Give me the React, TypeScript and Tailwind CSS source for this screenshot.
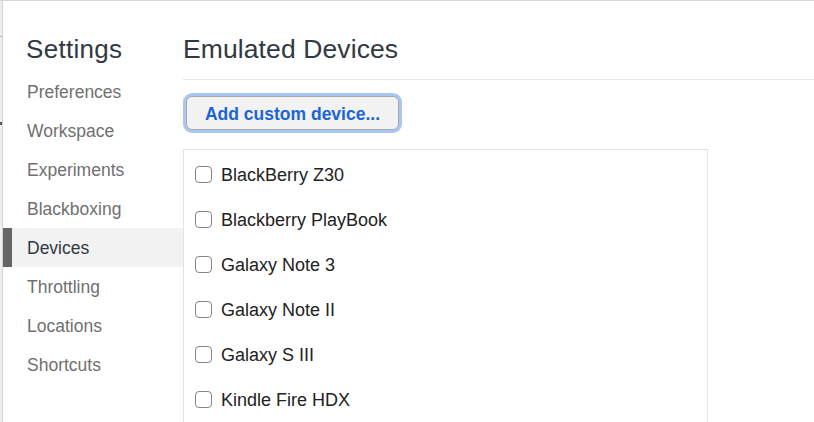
import React, { useState } from "react";

const navItems = [
  "Preferences",
  "Workspace",
  "Experiments",
  "Blackboxing",
  "Devices",
  "Throttling",
  "Locations",
  "Shortcuts",
];

const devices = [
  "BlackBerry Z30",
  "Blackberry PlayBook",
  "Galaxy Note 3",
  "Galaxy Note II",
  "Galaxy S III",
  "Kindle Fire HDX",
];

const App: React.FC = () => {
  const [selected, setSelected] = useState<string>("Devices");
  const [checked, setChecked] = useState<Record<string, boolean>>({});

  const toggle = (name: string): void => {
    setChecked((prev) => ({ ...prev, [name]: !prev[name] }));
  };

  return (
    <div className="w-[814px] h-[422px] overflow-hidden bg-white flex flex-col font-['Liberation_Sans',Arial,sans-serif]">
      {/* top edge of the window behind */}
      <div className="h-px bg-[#d6d6d6] shrink-0" />

      <div className="flex flex-1 min-h-0">
        {/* sliver of the panel underneath */}
        <div className="w-[3px] shrink-0 bg-[#efefef] border-r border-[#d2d2d2] flex flex-col">
          <div className="h-[35px]" />
          <div className="h-px bg-[#b5b5b5]" />
          <div className="h-[85px]" />
          <div className="h-[3px] w-[2px] bg-[#555]" />
        </div>

        {/* Sidebar */}
        <div className="w-[180px] shrink-0 flex flex-col">
          <div className="h-[71px] pl-[23px] pt-[35px]">
            <h1 className="text-[26px] leading-none text-[#303942] tracking-[0.3px]">
              Settings
            </h1>
          </div>
          {navItems.map((item: string) => {
            const active = item === selected;
            return (
              <div
                key={item}
                onClick={() => setSelected(item)}
                className={`h-[39px] flex items-center cursor-default ${
                  active ? "bg-[#f2f2f2]" : ""
                }`}
              >
                <div
                  className={`w-[9px] self-stretch ${
                    active ? "bg-[#666666]" : ""
                  }`}
                />
                <span
                  className={`pl-[15px] pt-[2px] text-[17.5px] leading-none ${
                    active ? "text-[#303942]" : "text-[#707070]"
                  }`}
                >
                  {item}
                </span>
              </div>
            );
          })}
        </div>

        {/* Main content */}
        <div className="flex-1 flex flex-col min-w-0">
          <div className="h-[79px] pt-[35px] border-b border-[#e8e8e8] shrink-0">
            <h2 className="text-[26.5px] leading-none text-[#303942] tracking-[0.1px]">
              Emulated Devices
            </h2>
          </div>

          <div className="pt-[16px] pl-[3px] shrink-0">
            <button className="w-[213px] h-[34px] pt-[3px] rounded-[6px] border border-[#a8a8a8] bg-[#f2f2f2] ring-[3px] ring-[#a9c7f5] text-[17.5px] font-bold text-[#1b65d6] leading-none">
              Add custom device...
            </button>
          </div>

          <div className="mt-[19px] w-[525px] flex-1 border border-b-0 border-[#e2e2e2] flex flex-col pt-[2px]">
            {devices.map((name: string) => (
              <label
                key={name}
                className="h-[45px] shrink-0 flex items-center pl-[11px] gap-[9px] cursor-default"
                onClick={() => toggle(name)}
              >
                <span
                  className={`w-[17px] h-[17px] rounded-[4px] border border-[#858585] ${
                    checked[name] ? "bg-[#1b65d6]" : "bg-white"
                  }`}
                />
                <span className="text-[18px] leading-none text-[#222222] pt-[1px]">
                  {name}
                </span>
              </label>
            ))}
          </div>
        </div>
      </div>
    </div>
  );
};

export default App;
